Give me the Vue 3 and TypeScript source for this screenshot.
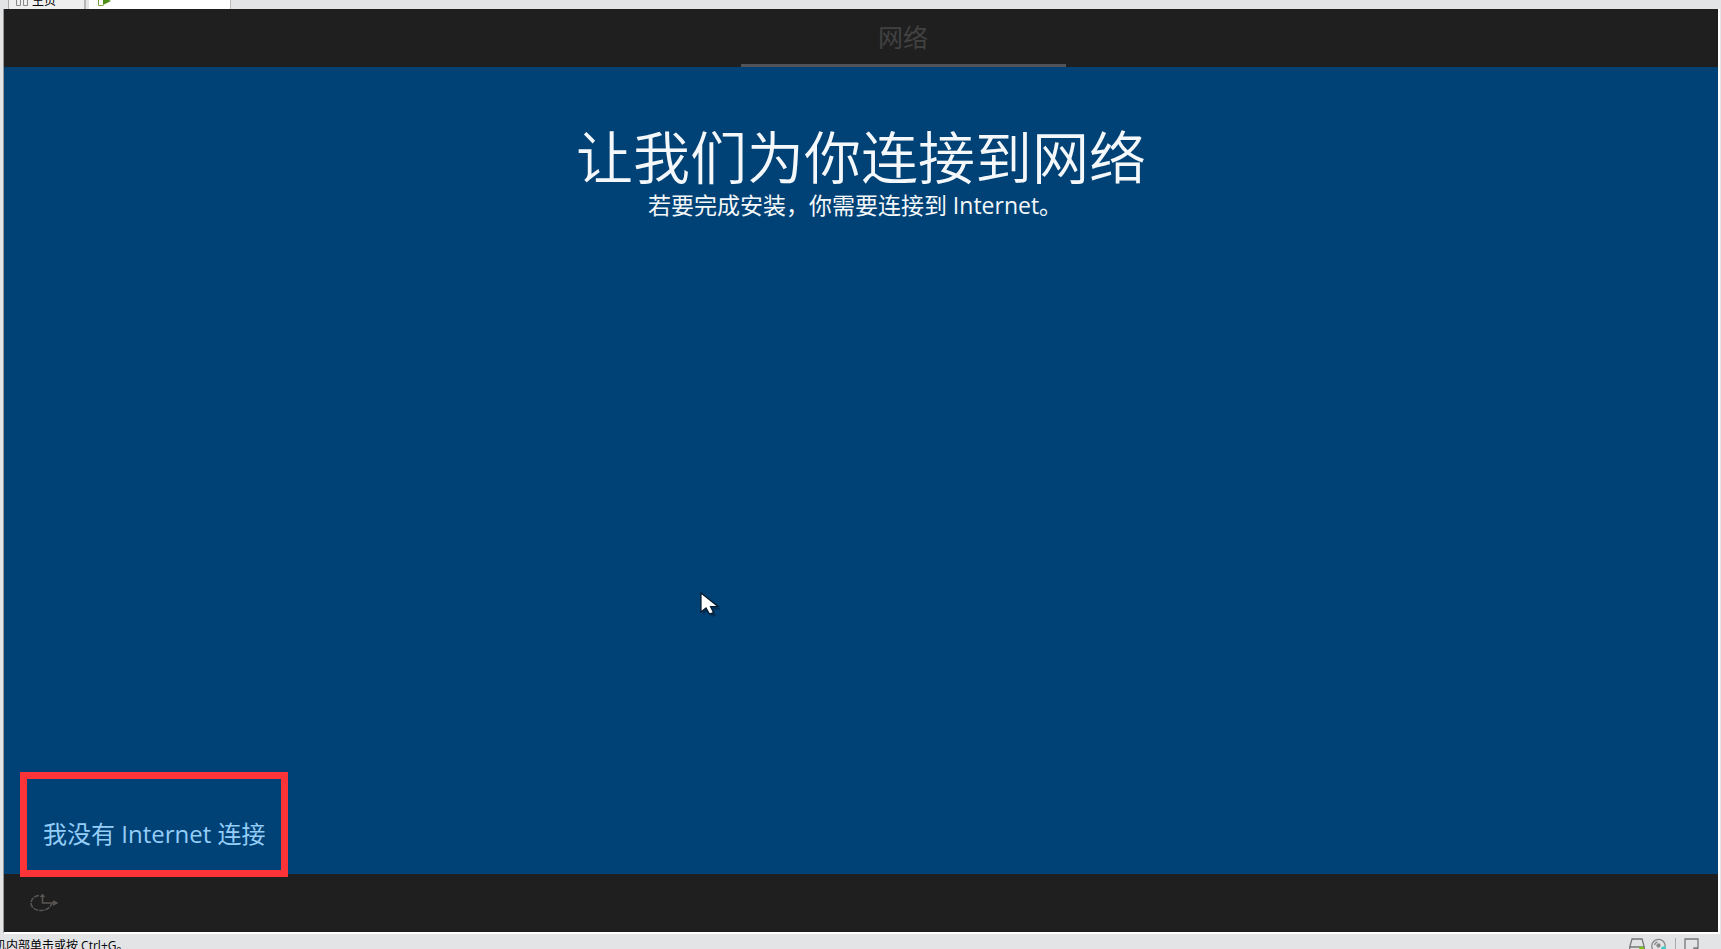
<script setup lang="ts">
const title: string = '让我们为你连接到网络'
const subtitle: string = '若要完成安装，你需要连接到 Internet。'
</script>

<template>
  <div class="window">
    <nav class="tabs">
      <button class="tab home" type="button">
        <svg width="12" height="12" viewBox="0 0 12 12" fill="none" stroke="#888" aria-hidden="true">
          <path d="M.5 3.500h4v8h-4zM7.500 3.500h4v8h-4z" />
        </svg>
        <span>主页</span>
      </button>
      <button class="tab current" type="button" aria-label="虚拟机">
        <svg width="13" height="12" viewBox="0 0 13 12" aria-hidden="true">
          <path d="M2.500 1H.5v10.500h5" fill="none" stroke="#76a33b" />
          <path d="M5 3l8 4-8 4z" fill="#4f8f17" />
        </svg>
      </button>
    </nav>

    <div class="screen">
      <header class="top"><span class="step">网络</span></header>
      <main class="content">
        <h1>{{ title }}</h1>
        <p>{{ subtitle }}</p>
        <div class="highlight">
          <a href="#offline">我没有 Internet 连接</a>
        </div>
        <svg class="pointer" width="22" height="26" viewBox="0 0 22 26" aria-hidden="true">
          <path d="M3 3v20l5-4 4 6 4-1.500-3-6h8z" fill="#001a33" opacity=".45" />
          <path d="M1 1v19l5-4 3.500 6 4-1.500-3-6H18z" fill="#fff" stroke="#06192b" stroke-width="1.200" />
        </svg>
      </main>
      <footer class="bottom">
        <button class="access" type="button" aria-label="轻松使用">
          <svg width="28" height="18" viewBox="0 0 28 18" fill="none" stroke="#5a5654" stroke-width="1.500" aria-hidden="true">
            <path d="M9 1.500C4.500 2 1 5 1 9s4 7.500 10 7.500c5.500 0 9-3 11-7" stroke-dasharray="5 1" />
            <path d="M12.500 0v9H27M23 7l4 2-4 2M10.500 3l2-2 2 2" />
          </svg>
        </button>
      </footer>
    </div>

    <div class="status">
      <span class="hint">机内部单击或按 Ctrl+G。</span>
      <div class="devices">
        <svg width="16" height="16" viewBox="0 0 16 16" fill="none" stroke="#777" stroke-width="1.300" aria-hidden="true">
          <path d="M3 1h10l2.300 8v5H.7V9zM1 9h14" />
          <circle cx="12.500" cy="11" r="2.500" fill="#76c51b" stroke="none" />
        </svg>
        <svg width="16" height="16" viewBox="0 0 16 16" fill="none" stroke="#888" stroke-width="1.300" aria-hidden="true">
          <circle cx="7.500" cy="8" r="6.700" />
          <circle cx="7.500" cy="7.500" r="1.500" fill="#888" />
          <path d="M3.500 7a4 4 0 0 1 3-3" />
          <circle cx="12.500" cy="11" r="2.500" fill="#32cfcb" stroke="none" />
        </svg>
        <span class="divider"></span>
        <svg width="16" height="16" viewBox="0 0 16 16" fill="none" stroke="#777" stroke-width="1.300" aria-hidden="true">
          <path d="M1 1h13v9l-4 4H1zM14 10h-4v4" />
        </svg>
      </div>
    </div>
  </div>
</template>

<style>
body {
  margin: 0;
  overflow: hidden;
}
</style>

<style scoped>
.window {
  display: flex;
  flex-direction: column;
  height: 100vh;
  overflow: hidden;
  background: #e3e4e6;
  font-family: "Open Sans", "Noto Sans CJK SC", sans-serif;
}
button {
  border: 0;
  padding: 0;
  background: none;
  font: inherit;
}
.tabs {
  display: flex;
  flex: none;
  align-items: flex-end;
  height: 9px;
  padding-left: 8px;
  overflow: hidden;
  box-sizing: border-box;
}
.tab {
  display: flex;
  align-items: center;
  box-sizing: border-box;
  height: 22px;
  margin-bottom: -6px;
}
.home {
  gap: 4px;
  width: 78px;
  padding: 0 0 8px 7px;
  border-left: 1px solid #aaa;
  border-right: 2px solid #b5b5b5;
  background: #eeeeef;
  color: #000;
  font-size: 12px;
}
.current {
  width: 142px;
  margin-left: 3px;
  padding: 0 0 8px 9px;
  border-right: 1px solid #bbb;
  background: #fff;
}
.screen {
  display: flex;
  flex: 1;
  flex-direction: column;
  min-height: 0;
  margin: 0 1px 0 3px;
  border-left: 1px solid #999;
  border-right: 2px solid #fff;
  border-bottom: 2px solid #fff;
}
.top {
  display: flex;
  justify-content: center;
  flex: none;
  height: 58px;
  padding-left: 84px;
  background: #1f1f1f;
}
.step {
  box-sizing: border-box;
  width: 325px;
  border-bottom: 3px solid #505458;
  color: #414141;
  font-size: 25px;
  line-height: 57px;
  text-align: center;
}
.content {
  position: relative;
  flex: 1;
  min-height: 0;
  background: #004275;
  color: #f4f8fb;
  text-align: center;
}
h1 {
  margin: 0;
  padding-top: 58px;
  font-size: 57px;
  font-weight: 350;
  line-height: 64px;
}
p {
  margin: 0;
  padding-right: 12px;
  font-size: 23px;
  line-height: 32px;
}
.highlight {
  position: absolute;
  bottom: -3px;
  left: 16px;
  z-index: 1;
  box-sizing: border-box;
  height: 105px;
  padding: 38px 16px 0;
  border: 7px solid #fc3437;
}
.highlight a {
  color: #94cdf8;
  font-size: 24px;
  line-height: 34px;
  text-decoration: none;
  white-space: nowrap;
}
.pointer {
  position: absolute;
  left: 696px;
  top: 525px;
}
.bottom {
  display: flex;
  align-items: center;
  flex: none;
  height: 58px;
  padding-left: 26px;
  background: #1f1f1f;
}
.access {
  display: flex;
}
.status {
  display: flex;
  justify-content: space-between;
  flex: none;
  height: 15px;
  overflow: hidden;
}
.hint {
  margin-left: -6px;
  color: #000;
  font-size: 12px;
  line-height: 24px;
}
.devices {
  display: flex;
  gap: 6px;
  padding: 4px 21px 0 0;
}
.divider {
  width: 1px;
  height: 16px;
  margin: 0 2px;
  background: #aaa;
}
</style>
